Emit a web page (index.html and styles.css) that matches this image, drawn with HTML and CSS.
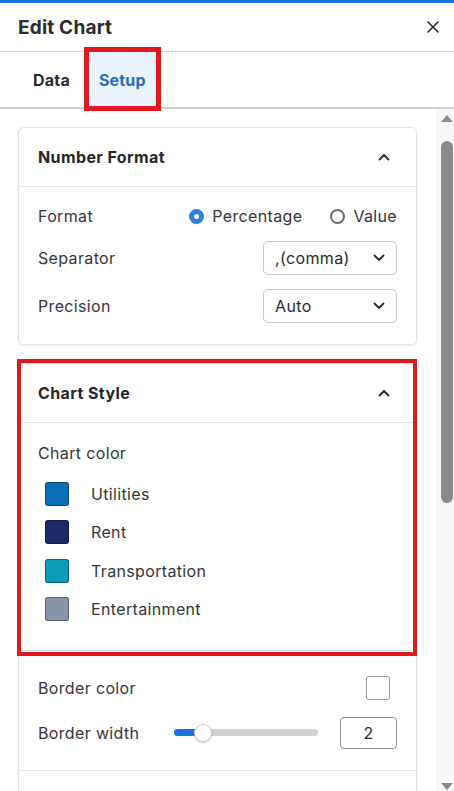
FILE: index.html
```html
<!DOCTYPE html>
<html lang="en">
<head>
<meta charset="utf-8">
<title>Edit Chart</title>
<link rel="stylesheet" href="styles.css">
</head>
<body>
<div class="topbar"></div>
<header class="header">
  <h1 class="title">Edit Chart</h1>
  <button class="close" aria-label="Close">
    <svg width="14" height="14" viewBox="0 0 14 14"><path d="M2 2 L12 12 M12 2 L2 12" stroke="#2a2a30" stroke-width="1.6" stroke-linecap="round" fill="none"/></svg>
  </button>
</header>
<nav class="tabs">
  <div class="tab">Data</div>
  <div class="tab active">Setup<span class="annot annot-tab"></span></div>
</nav>
<div class="main">
  <div class="content">
    <section class="card">
      <div class="card-head">
        <span class="card-title">Number Format</span>
        <svg class="chev" width="12" height="8" viewBox="0 0 12 8"><path d="M1.5 6.5 L6 2 L10.5 6.5" stroke="#2a2a30" stroke-width="1.8" fill="none" stroke-linecap="round" stroke-linejoin="round"/></svg>
      </div>
      <div class="card-body nf-body">
        <div class="row">
          <span class="label">Format</span>
          <div class="radios">
            <span class="radio checked"></span><span class="radio-text">Percentage</span>
            <span class="radio"></span><span class="radio-text">Value</span>
          </div>
        </div>
        <div class="row">
          <span class="label">Separator</span>
          <div class="select"><span>,(comma)</span>
            <svg width="12" height="8" viewBox="0 0 12 8"><path d="M1.5 1.5 L6 6 L10.5 1.5" stroke="#2a2a30" stroke-width="1.8" fill="none" stroke-linecap="round" stroke-linejoin="round"/></svg>
          </div>
        </div>
        <div class="row">
          <span class="label">Precision</span>
          <div class="select"><span>Auto</span>
            <svg width="12" height="8" viewBox="0 0 12 8"><path d="M1.5 1.5 L6 6 L10.5 1.5" stroke="#2a2a30" stroke-width="1.8" fill="none" stroke-linecap="round" stroke-linejoin="round"/></svg>
          </div>
        </div>
      </div>
    </section>

    <section class="card card-style">
      <span class="annot annot-card"></span>
      <div class="card-head">
        <span class="card-title">Chart Style</span>
        <svg class="chev" width="12" height="8" viewBox="0 0 12 8"><path d="M1.5 6.5 L6 2 L10.5 6.5" stroke="#2a2a30" stroke-width="1.8" fill="none" stroke-linecap="round" stroke-linejoin="round"/></svg>
      </div>
      <div class="card-body color-body">
        <div class="label">Chart color</div>
        <ul class="swatches">
          <li><span class="swatch sw-utilities"></span>Utilities</li>
          <li><span class="swatch sw-rent"></span>Rent</li>
          <li><span class="swatch sw-transport"></span>Transportation</li>
          <li><span class="swatch sw-ent"></span>Entertainment</li>
        </ul>
      </div>
      <div class="card-body border-body">
        <div class="row row-bc">
          <span class="label">Border color</span>
          <span class="swatch sw-border"></span>
        </div>
        <div class="row">
          <span class="label">Border width</span>
          <div class="slider">
            <div class="track"><div class="fill"></div></div>
            <span class="thumb"></span>
          </div>
          <div class="num">2</div>
        </div>
      </div>
      <div class="card-body more-body"></div>
    </section>
  </div>
  <div class="scrollbar">
    <span class="arrow arrow-up"></span>
    <div class="sb-track"><div class="sb-thumb"></div></div>
    <span class="arrow arrow-down"></span>
  </div>
</div>
</body>
</html>
```
FILE: styles.css
```css
* { box-sizing: border-box; }
html, body { margin: 0; padding: 0; }
body {
  width: 454px;
  height: 791px;
  overflow: hidden;
  background: #fff;
  font-family: Inter, "Noto Sans", "Liberation Sans", sans-serif;
  color: #35353b;
  display: flex;
  flex-direction: column;
}
.topbar { height: 3px; background: #1473e6; flex: none; }
.header {
  flex: none;
  height: 49px;
  display: flex;
  align-items: center;
  justify-content: space-between;
  padding: 0 14px 0 18px;
  border-bottom: 1px solid #dcdcdc;
}
.title { margin: 0; font-size: 19px; font-weight: 700; color: #2a2a32; letter-spacing: 0.2px; }
.close { background: none; border: 0; padding: 0; width: 14px; height: 14px; display: flex; }
.tabs {
  flex: none;
  height: 57px;
  display: flex;
  padding-left: 18px;
  border-bottom: 2px solid #cfcfcf;
}
.tab {
  position: relative;
  display: flex;
  align-items: center;
  padding: 0 15px;
  font-size: 16px;
  font-weight: 700;
  letter-spacing: 0.2px;
  color: #2a2a32;
  margin-bottom: -2px;
  border-bottom: 2px solid transparent;
}
.tab.active { color: #2d6db5; background: #eaf2fb; border-bottom-color: #2d6db5; padding: 0 14px; }
.annot { position: absolute; border: 4px solid #e4171c; pointer-events: none; }
.annot-tab { top: -5px; bottom: -4px; left: -1px; right: -1px; border-width: 5px; }
.main { flex: 1; display: flex; min-height: 0; }
.content {
  flex: 1;
  overflow: hidden;
  padding: 18px 19px 0 18px;
  display: flex;
  flex-direction: column;
  gap: 18px;
}
.card {
  flex: none;
  border: 1px solid #e2e2e2;
  border-radius: 6px;
  box-shadow: 0 1px 3px rgba(0,0,0,0.08);
  background: #fff;
}
.card-style { position: relative; }
.annot-card { top: -5px; left: -2px; width: 400px; height: 297px; z-index: 2; }
.card-head {
  height: 59px;
  display: flex;
  align-items: center;
  justify-content: space-between;
  padding: 0 26px 0 19px;
  border-bottom: 1px solid #e6e6e6;
}
.card-title { font-size: 16px; font-weight: 700; color: #26262c; letter-spacing: 0.4px; }
.card-body { padding: 0 19px; }
.nf-body { padding-top: 18px; padding-bottom: 21px; display: flex; flex-direction: column; gap: 14px; }
.row { display: flex; align-items: center; justify-content: space-between; }
.label { font-size: 16px; color: #35353b; line-height: 22px; letter-spacing: 0.35px; }
.radios { display: flex; align-items: center; }
.radio {
  width: 15px; height: 15px;
  border-radius: 50%;
  border: 2px solid #6a6a6a;
  margin-right: 8px;
  flex: none;
}
.radio.checked { border: 5px solid #2f7fd6; background: #fff; }
.radio-text { font-size: 16px; line-height: 22px; color: #35353b; letter-spacing: 0.35px; }
.radio-text:nth-child(2) { margin-right: 28px; }
.select {
  width: 134px;
  height: 34px;
  border: 1px solid #c9c9c9;
  border-radius: 5px;
  display: flex;
  align-items: center;
  justify-content: space-between;
  padding: 0 11px 0 11px;
  font-size: 16px;
  letter-spacing: 0.35px;
  color: #2a2a30;
}
.color-body { padding-top: 19px; padding-bottom: 29px; border-bottom: 1px solid #e6e6e6; }
.swatches { list-style: none; margin: 18px 0 0 7px; padding: 0; display: flex; flex-direction: column; gap: 14.3px; }
.swatches li { display: flex; align-items: center; height: 24px; font-size: 16px; color: #35353b; letter-spacing: 0.35px; }
.swatch {
  width: 24px; height: 24px;
  border-radius: 3px;
  border: 1px solid rgba(0,0,0,0.35);
  margin-right: 22px;
  flex: none;
}
.sw-utilities { background: #0b6fb5; }
.sw-rent { background: #1c2a66; }
.sw-transport { background: #0c9cb8; }
.sw-ent { background: #8794aa; }
.sw-border { background: #fff; border-color: #9a9a9a; margin-right: 7px; }
.border-body { padding-top: 25px; padding-bottom: 21px; border-bottom: 1px solid #e6e6e6; display: flex; flex-direction: column; gap: 17px; }
.row-bc { height: 24px; }
.slider { position: relative; width: 144px; height: 20px; margin-right: 22px; display: flex; align-items: center; margin-left: auto; }
.track { width: 100%; height: 7px; border-radius: 4px; background: #d1d1d1; overflow: hidden; }
.fill { width: 26px; height: 100%; background: #1a72dd; }
.thumb {
  position: absolute;
  left: 20px;
  top: 1px;
  width: 18px; height: 18px;
  border-radius: 50%;
  background: #fff;
  border: 1px solid #cfcfcf;
  box-shadow: 0 1px 2px rgba(0,0,0,0.2);
}
.num {
  width: 57px; height: 32px;
  border: 1px solid #8f8f8f;
  border-radius: 4px;
  display: flex; align-items: center; justify-content: center;
  font-size: 16px; color: #2a2a30;
}
.more-body { height: 60px; }
.scrollbar {
  flex: none;
  width: 18px;
  background: #f8f8f8;
  display: flex;
  flex-direction: column;
  align-items: flex-end;
  padding: 6px 1px 1px 0;
}
.arrow { width: 0; height: 0; border-left: 6px solid transparent; border-right: 6px solid transparent; flex: none; }
.arrow-up { border-bottom: 7px solid #8a8a8a; }
.arrow-down { border-top: 7px solid #8a8a8a; }
.sb-track { flex: 1; width: 12px; padding-top: 19px; }
.sb-thumb { width: 12px; height: 362px; background: #8a8a8a; border-radius: 6px; }
```
